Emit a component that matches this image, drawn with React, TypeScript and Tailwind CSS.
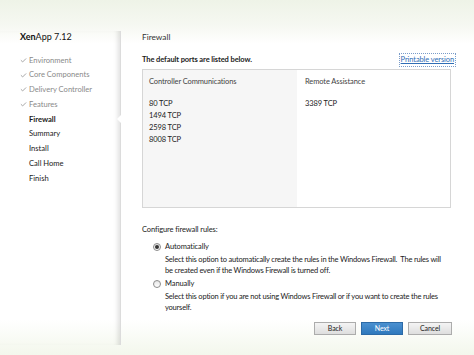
import { Check } from "lucide-react";

const steps = [
  { label: "Environment", done: true },
  { label: "Core Components", done: true },
  { label: "Delivery Controller", done: true },
  { label: "Features", done: true },
  { label: "Firewall", current: true },
  { label: "Summary" },
  { label: "Install" },
  { label: "Call Home" },
  { label: "Finish" },
];

const controllerPorts = ["80 TCP", "1494 TCP", "2598 TCP", "8008 TCP"];

const Radio = ({ checked }: { checked?: boolean }) => (
  <span className="w-[8px] h-[8px] rounded-full border border-[#8c8c8c] bg-[linear-gradient(180deg,#e6e6e6,#ffffff)] flex items-center justify-center">
    {checked && <span className="w-[4px] h-[4px] rounded-full bg-[#333]" />}
  </span>
);

export default function App() {
  return (
    <div className="w-[474px] h-[355px] overflow-hidden flex bg-[linear-gradient(180deg,#eef3e7_0px,#f6f8f2_26px,#ffffff_44px,#ffffff_320px,#f3f7ec_355px)] text-[#222] font-['Lato','Noto_Sans',sans-serif]">
      <div className="relative w-[121px] mt-[31px] mb-[10px] pl-[20px] border-r border-[#dcdcdc] shadow-[inset_-5px_0_5px_-3px_rgba(0,0,0,0.13)]">
        <div className="h-[12px] leading-[12px] text-[9px] text-[#111]">
          <span className="font-bold">Xen</span>App 7.12
        </div>
        <ul className="mt-[10px]">
          {steps.map((s) => (
            <li
              key={s.label}
              className={`relative h-[14.75px] flex items-center text-[7.6px] ${
                s.done ? "text-[#8a8a8a]" : "text-[#1a1a1a]"
              } ${s.current ? "font-bold" : ""}`}
            >
              <span className="w-[9px] flex items-center">
                {s.done && <Check size={7} strokeWidth={3} className="text-[#9a9a9a]" />}
              </span>
              {s.label}
              {s.current && (
                <span className="absolute right-[-1px] top-[3px] w-0 h-0 border-y-[4px] border-y-transparent border-r-[4px] border-r-white" />
              )}
            </li>
          ))}
        </ul>
      </div>

      <div className="flex-1 pl-[21px] pr-[23px] pt-[31px] text-[7.5px] tracking-[-0.1px]">
        <div className="h-[12px] leading-[12px] text-[8.3px] text-[#333] tracking-normal">Firewall</div>

        <div className="mt-[11px] h-[12px] flex items-center justify-between">
          <span className="font-bold">The default ports are listed below.</span>
          <span className="-mr-[4px] px-[1px] text-[#2f6db5] underline underline-offset-1 outline outline-1 outline-dotted outline-[#7a9cc9]">
            Printable version
          </span>
        </div>

        <div className="mt-[3px] h-[139px] border border-[#d6d6d6] grid grid-cols-[154px_1fr]">
          <div className="bg-[#f6f6f6] pl-[6px] pt-[6px]">
            <div className="h-[12px] leading-[12px] text-[#444]">Controller Communications</div>
            <div className="mt-[10px] leading-[12px]">
              {controllerPorts.map((p) => (
                <div key={p}>{p}</div>
              ))}
            </div>
          </div>
          <div className="bg-white pl-[8px] pt-[6px]">
            <div className="h-[12px] leading-[12px] text-[#444]">Remote Assistance</div>
            <div className="mt-[10px] leading-[12px]">3389 TCP</div>
          </div>
        </div>

        <div className="mt-[16px] h-[12px] leading-[12px]">Configure firewall rules:</div>

        <div className="mt-[5px] ml-[11px]">
          <div className="h-[12px] flex items-center gap-[4px]">
            <Radio checked />
            <span>Automatically</span>
          </div>
          <div className="pl-[12px] leading-[11px] mt-[0.5px] whitespace-nowrap tracking-[-0.2px]">
            Select this option to automatically create the rules in the Windows Firewall.&nbsp; The rules will
            <br />
            be created even if the Windows Firewall is turned off.
          </div>

          <div className="mt-[2px] h-[12px] flex items-center gap-[4px]">
            <Radio />
            <span>Manually</span>
          </div>
          <div className="pl-[12px] leading-[11px] mt-[1px] whitespace-nowrap tracking-[-0.2px]">
            Select this option if you are not using Windows Firewall or if you want to create the rules
            <br />
            yourself.
          </div>
        </div>

        <div className="mt-[9px] flex justify-end gap-[5px] -mr-[1px]">
          <button className="w-[42px] h-[13px] border border-[#acacac] bg-[linear-gradient(180deg,#f4f4f4,#dedede)] text-[7px] text-[#222] leading-none">
            Back
          </button>
          <button className="w-[42px] h-[13px] border border-[#2c6aa6] bg-[linear-gradient(180deg,#4a90d0,#2f78bd)] text-[7px] text-white leading-none">
            Next
          </button>
          <button className="w-[44px] h-[13px] border border-[#acacac] bg-[linear-gradient(180deg,#f4f4f4,#dedede)] text-[7px] text-[#222] leading-none">
            Cancel
          </button>
        </div>
      </div>
    </div>
  );
}
